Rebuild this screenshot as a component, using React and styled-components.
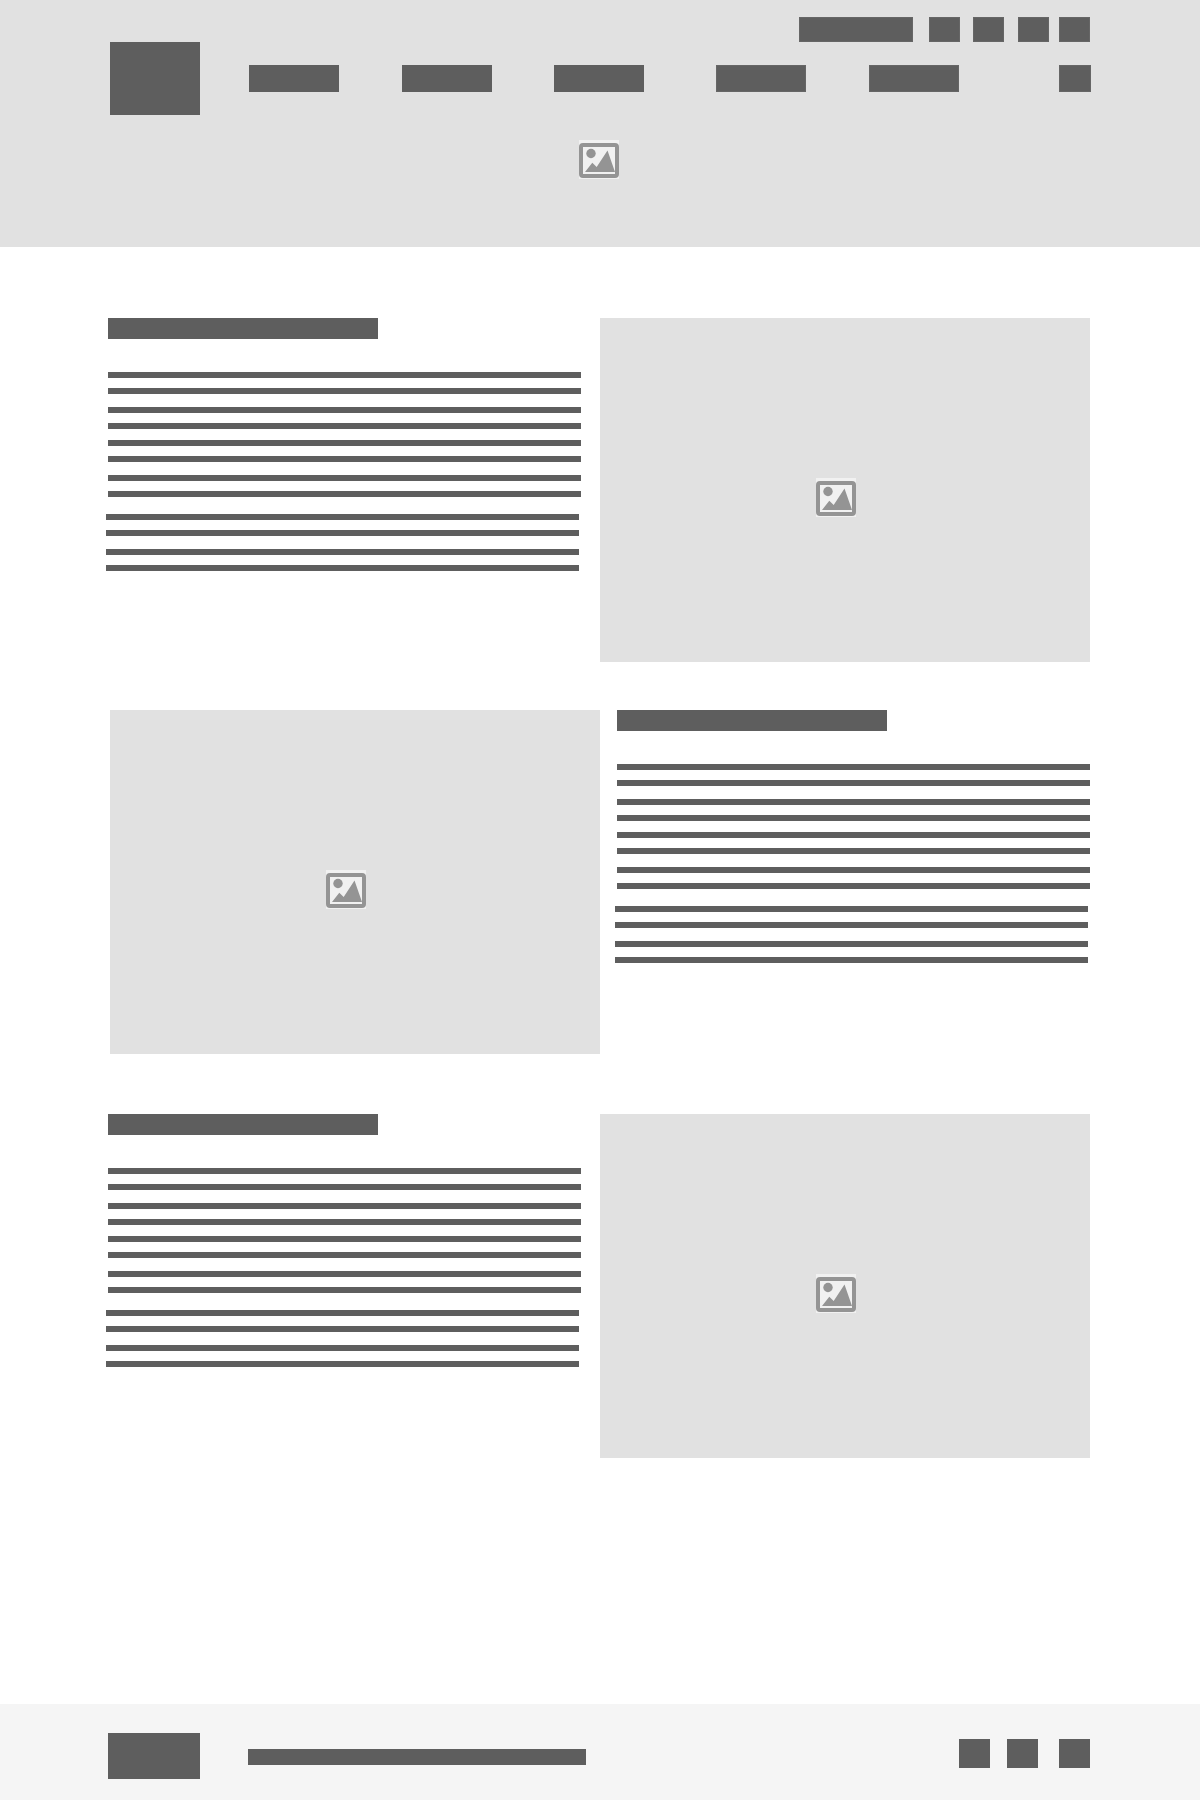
import React from 'react'
import styled, { createGlobalStyle } from 'styled-components'

const Global = createGlobalStyle`
  * {
    box-sizing: border-box;
  }

  body {
    margin: 0;
    background: #fff;
    font-family: 'Liberation Sans', sans-serif;
  }
`

const Page = styled.div`
  display: flex;
  flex-direction: column;
  width: 1200px;
  min-height: 1800px;
`

const Header = styled.header`
  height: 247px;
  padding: 17px 110px 0;
  background: #e1e1e1;
`

const TopRow = styled.div`
  display: flex;
  justify-content: flex-end;
`

const TopItem = styled.div`
  flex: none;
  width: ${p => p.$width}px;
  height: 25px;
  margin-left: ${p => p.$gap}px;
  background: #5e5e5e;
  border: 1px solid #666;
`

const MainRow = styled.div`
  display: flex;
  align-items: center;
  height: 73px;
`

const Logo = styled.div`
  flex: none;
  width: 90px;
  height: 73px;
  background: #5e5e5e;
`

const NavItem = styled.div`
  flex: none;
  width: ${p => p.$width}px;
  height: 27px;
  margin-left: ${p => p.$gap}px;
  background: #5e5e5e;
  border: ${p => (p.$outlined ? '1px solid #666' : 'none')};
`

const HeroPicture = styled.div`
  margin: 25px 0 0 469px;
  width: 40px;
`

const Section = styled.section`
  display: grid;
  grid-template-columns: ${p => p.$columns};
  margin-top: ${p => p.$top}px;
  padding-left: ${p => p.$left}px;
`

const Copy = styled.div`
  padding-left: ${p => p.$inset || 0}px;
`

const Heading = styled.div`
  width: 270px;
  height: 21px;
  margin-bottom: 33px;
  background: #5e5e5e;
`

const Paragraph = styled.div`
  display: flex;
  flex-direction: column;
  width: 473px;
  margin-left: ${p => p.$shift || 0}px;
  margin-bottom: 17px;
`

const LinePair = styled.div`
  display: flex;
  flex-direction: column;
  gap: 10px;
  margin-bottom: ${p => p.$after}px;
`

const Line = styled.div`
  height: 6px;
  background: #5e5e5e;
`

const Picture = styled.div`
  height: 344px;
  padding: 160px 0 0 216px;
  background: #e1e1e1;
`

const Footer = styled.footer`
  display: flex;
  align-items: flex-start;
  height: 96px;
  margin-top: auto;
  padding: 29px 110px 0 108px;
  background: #f5f5f5;
`

const FooterLogo = styled.div`
  flex: none;
  width: 92px;
  height: 46px;
  background: #5e5e5e;
`

const FooterText = styled.div`
  flex: none;
  width: 338px;
  height: 16px;
  margin: 16px 0 0 48px;
  background: #5e5e5e;
`

const FooterIcons = styled.div`
  display: flex;
  margin-left: auto;
  margin-top: 6px;
`

const FooterIcon = styled.div`
  width: 31px;
  height: 29px;
  margin-left: ${p => p.$gap}px;
  background: #5e5e5e;
`

const ImageIcon = () => (
  <svg width="40" height="39" viewBox="0 0 40 39" style={{ display: 'block' }}>
    <rect width="40" height="39" fill="#f1f1f1" />
    <rect x="2" y="5" width="36" height="31" rx="2" fill="#f1f1f1" stroke="#949494" strokeWidth="4" />
    <circle cx="12" cy="13.5" r="4.7" fill="#949494" />
    <path d="M6 32 L13.3 22.7 L17.7 27 L28.5 10.5 L36 32 Z" fill="#949494" />
  </svg>
)

const topItems = [
  { width: 114, gap: 0 },
  { width: 31, gap: 16 },
  { width: 31, gap: 13 },
  { width: 31, gap: 14 },
  { width: 31, gap: 10 },
]

const navItems = [
  { width: 90, gap: 49 },
  { width: 90, gap: 63 },
  { width: 90, gap: 62 },
  { width: 90, gap: 72, outlined: true },
  { width: 90, gap: 63, outlined: true },
  { width: 32, gap: 100, outlined: true },
]

const TextBlock = ({ inset }) => (
  <Copy $inset={inset}>
    <Heading />
    <Paragraph>
      {[13, 11, 13, 0].map((after, i) => (
        <LinePair key={i} $after={after}>
          <Line />
          <Line />
        </LinePair>
      ))}
    </Paragraph>
    <Paragraph $shift={-2}>
      {[13, 0].map((after, i) => (
        <LinePair key={i} $after={after}>
          <Line />
          <Line />
        </LinePair>
      ))}
    </Paragraph>
  </Copy>
)

export default function App() {
  return (
    <Page>
      <Global />
      <Header>
        <TopRow>
          {topItems.map((item, i) => (
            <TopItem key={i} $width={item.width} $gap={item.gap} />
          ))}
        </TopRow>
        <MainRow>
          <Logo />
          {navItems.map((item, i) => (
            <NavItem key={i} $width={item.width} $gap={item.gap} $outlined={item.outlined} />
          ))}
        </MainRow>
        <HeroPicture>
          <ImageIcon />
        </HeroPicture>
      </Header>

      <Section $columns="492px 490px" $top={71} $left={108}>
        <TextBlock />
        <Picture>
          <ImageIcon />
        </Picture>
      </Section>

      <Section $columns="490px 490px" $top={48} $left={110}>
        <Picture>
          <ImageIcon />
        </Picture>
        <TextBlock inset={17} />
      </Section>

      <Section $columns="492px 490px" $top={60} $left={108}>
        <TextBlock />
        <Picture>
          <ImageIcon />
        </Picture>
      </Section>

      <Footer>
        <FooterLogo />
        <FooterText />
        <FooterIcons>
          <FooterIcon $gap={0} />
          <FooterIcon $gap={17} />
          <FooterIcon $gap={21} />
        </FooterIcons>
      </Footer>
    </Page>
  )
}
